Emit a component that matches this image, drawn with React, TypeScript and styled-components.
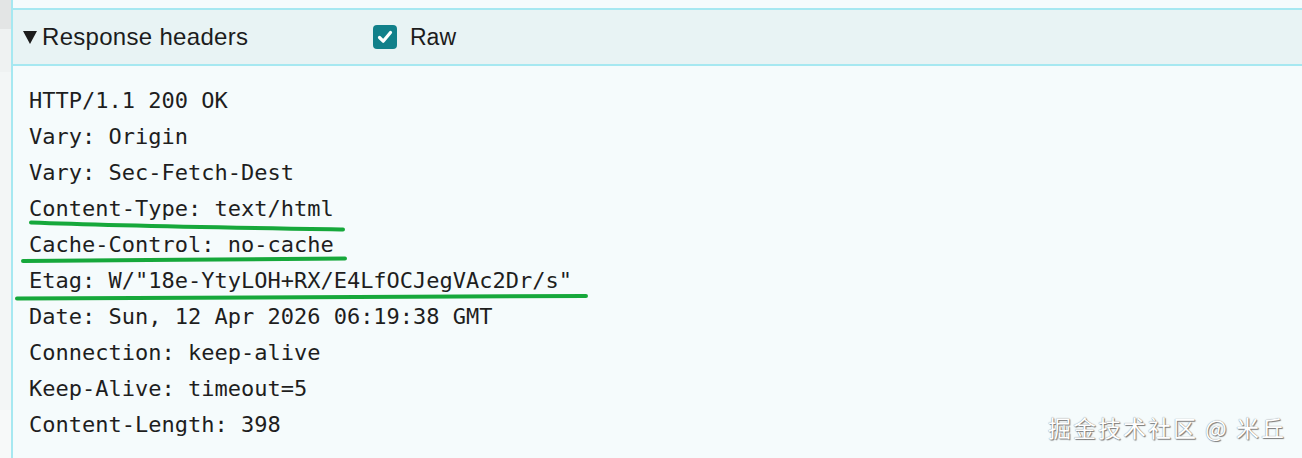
import React from "react";
import styled, { createGlobalStyle } from "styled-components";

const Global = createGlobalStyle`
  html, body { margin: 0; padding: 0; background: #f5fbfc; }
  #root { width: 1302px; height: 458px; overflow: hidden; }
`;

const Page = styled.div`
  position: relative;
  display: flex;
  width: 1302px;
  height: 458px;
  background: #f5fbfc;
  overflow: hidden;
`;

const LeftStrip = styled.div`
  width: 11px;
  flex: none;
  background: linear-gradient(
    to bottom,
    #e3e5e5 0px,
    #e3e5e5 29px,
    #eff2f2 29px,
    #eff2f2 72px,
    #f3f6f6 72px,
    #f3f6f6 410px,
    #f7f9f9 410px
  );
`;

const Panel = styled.div`
  flex: 1;
  display: flex;
  flex-direction: column;
  border-left: 2px solid #a6e8f1;
  background: #f5fbfc;
`;

const Header = styled.div`
  margin-top: 8px;
  height: 54px;
  border-top: 2px solid #a6e8f1;
  border-bottom: 2px solid #a6e8f1;
  background: #e8f3f4;
  display: flex;
  align-items: center;
  padding-left: 10px;
  font-family: "Liberation Sans", Arial, sans-serif;
  color: #1c1c1c;
`;

const Title = styled.div`
  width: 350px;
  display: flex;
  align-items: center;
  gap: 5px;
  font-size: 24px;
  letter-spacing: 0.3px;
`;

const Caret = styled.svg`
  width: 14px;
  height: 13px;
  flex: none;
  margin-top: 1px;
`;

const RawToggle = styled.label`
  display: flex;
  align-items: center;
  gap: 13px;
  font-size: 23px;
`;

const Box = styled.span`
  width: 24px;
  height: 24px;
  border-radius: 4px;
  background: #11808a;
  display: flex;
  align-items: center;
  justify-content: center;
`;

const Body = styled.div`
  padding: 17px 0 0 16px;
  font-family: "DejaVu Sans Mono", "Liberation Mono", monospace;
  font-size: 22px;
  line-height: 36px;
  color: #1e1e1e;
  white-space: pre;
`;

const Line = styled.div``;

const Marks = styled.svg`
  position: absolute;
  left: 0;
  top: 0;
  pointer-events: none;
`;

const Watermark = styled.div`
  position: absolute;
  right: 16px;
  bottom: 14px;
  font-family: "Noto Sans CJK SC", "Liberation Sans", sans-serif;
  font-size: 23px;
  color: #ffffff;
  text-shadow: 0 0 1px #6e6e6e, 1px 1px 1px #7a7a7a;
  letter-spacing: 2px;
`;

const lines = [
  "HTTP/1.1 200 OK",
  "Vary: Origin",
  "Vary: Sec-Fetch-Dest",
  "Content-Type: text/html",
  "Cache-Control: no-cache",
  'Etag: W/"18e-YtyLOH+RX/E4LfOCJegVAc2Dr/s"',
  "Date: Sun, 12 Apr 2026 06:19:38 GMT",
  "Connection: keep-alive",
  "Keep-Alive: timeout=5",
  "Content-Length: 398",
];

export default function App() {
  return (
    <>
      <Global />
      <Page>
        <LeftStrip />
        <Panel>
          <Header>
            <Title>
              <Caret viewBox="0 0 14 13">
                <polygon points="0,0 14,0 7,13" fill="#1c1c1c" />
              </Caret>
              <span>Response headers</span>
            </Title>
            <RawToggle>
              <Box>
                <svg width="18" height="18" viewBox="0 0 18 18">
                  <path
                    d="M3.5 9.5 L7.2 13.2 L14.5 4.5"
                    fill="none"
                    stroke="#ffffff"
                    strokeWidth="3.2"
                    strokeLinecap="round"
                    strokeLinejoin="round"
                  />
                </svg>
              </Box>
              <span>Raw</span>
            </RawToggle>
          </Header>
          <Body>
            {lines.map((l) => (
              <Line key={l}>{l}</Line>
            ))}
          </Body>
        </Panel>
        <Marks width="1302" height="458" viewBox="0 0 1302 458">
          <path
            d="M31 222.5 C 120 226, 250 228, 343 229.5"
            fill="none"
            stroke="#16a83b"
            strokeWidth="4"
            strokeLinecap="round"
          />
          <path
            d="M23 261 C 120 260, 250 259.5, 345 258.5"
            fill="none"
            stroke="#16a83b"
            strokeWidth="4"
            strokeLinecap="round"
          />
          <path
            d="M17 298.5 C 200 297.5, 420 297, 586 296"
            fill="none"
            stroke="#16a83b"
            strokeWidth="4"
            strokeLinecap="round"
          />
        </Marks>
        <Watermark>掘金技术社区 @ 米丘</Watermark>
      </Page>
    </>
  );
}
